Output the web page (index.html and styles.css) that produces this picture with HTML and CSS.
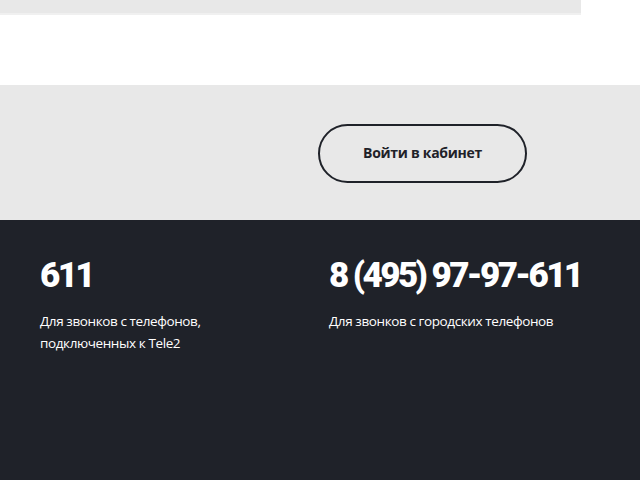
FILE: index.html
```html
<!DOCTYPE html>
<html lang="ru">
<head>
  <meta charset="UTF-8">
  <meta name="viewport" content="width=device-width, initial-scale=1.0">
  <title>Tele2 — контакты</title>
  <link rel="stylesheet" href="styles.css">
</head>
<body>

  <div class="top">
    <div class="top-strip"></div>
  </div>

  <div class="login">
    <button class="login-btn">Войти в кабинет</button>
  </div>

  <div class="footer">
    <div class="contact">
      <div class="phone">611</div>
      <p>Для звонков с телефонов,<br>подключенных к Tele2</p>
    </div>
    <div class="contact">
      <div class="phone">8 (495) 97-97-611</div>
      <p>Для звонков с городских телефонов</p>
    </div>
  </div>

</body>
</html>
```

FILE: styles.css
```css
body {
  margin: 0;
  padding: 0;
  font-family: 'Open Sans', sans-serif;
  background: #ffffff;
}
.top {
  height: 85px;
}
.top-strip {
  width: 581px;
  height: 13px;
  background: #e8e8e8;
  border-bottom: 2px solid #f0f0f0;
}
.login {
  height: 135px;
  background: #e8e8e8;
  display: flex;
  align-items: flex-start;
  padding-left: 318px;
  box-sizing: border-box;
  padding-top: 39px;
}
.login-btn {
  width: 209px;
  height: 59px;
  padding: 0 0 3px 0;
  border: 2px solid #1f2229;
  border-radius: 30px;
  background: transparent;
  font-family: 'Open Sans', sans-serif;
  font-weight: bold;
  font-size: 14px;
  color: #1f2229;
  letter-spacing: -0.3px;
  cursor: pointer;
}
.footer {
  background: #1f2229;
  height: 260px;
  display: flex;
  padding: 36px 0 0 40px;
  box-sizing: border-box;
  color: #ffffff;
}
.contact {
  width: 289px;
}
.phone {
  font-family: 'Roboto', sans-serif;
  font-weight: 900;
  font-size: 35px;
  line-height: 40px;
  letter-spacing: -2.6px;
}
.contact p {
  margin: 14px 0 0 0;
  font-size: 13.5px;
  line-height: 22px;
  letter-spacing: -0.4px;
}
```
